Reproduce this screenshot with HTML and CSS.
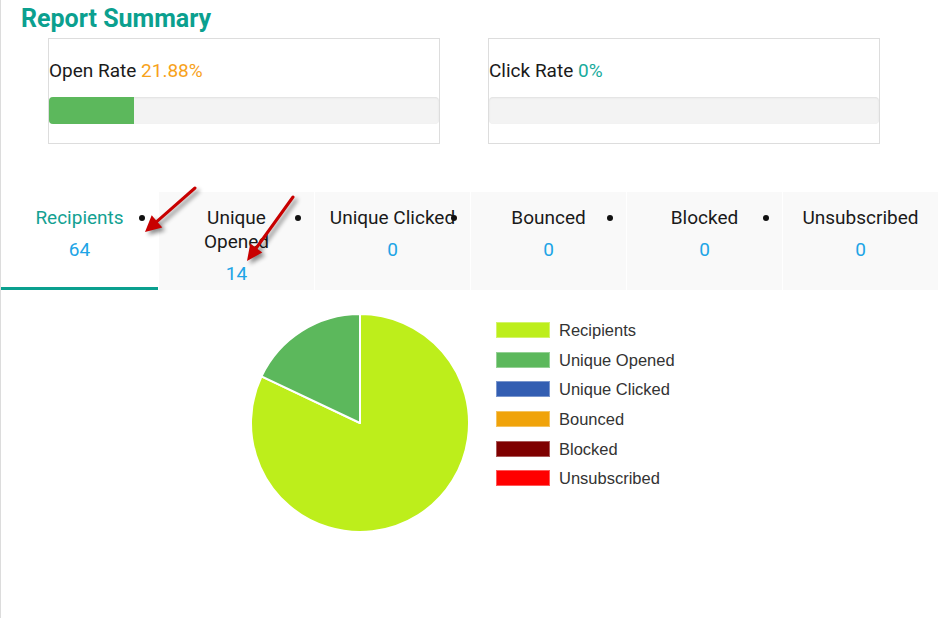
FILE: index.html
```html
<!DOCTYPE html>
<html>
<head>
<meta charset="utf-8">
<link rel="stylesheet" href="styles.css">
</head>
<body>
<div class="page">
  <h2 class="title">Report Summary</h2>
  <div class="rates">
    <div class="rate-card">
      <div class="rate-label">Open Rate <span class="pct-open">21.88%</span></div>
      <div class="progress"><div class="progress-bar" style="width:21.88%"></div></div>
    </div>
    <div class="rate-card">
      <div class="rate-label">Click Rate <span class="pct-click">0%</span></div>
      <div class="progress"><div class="progress-bar" style="width:0%"></div></div>
    </div>
  </div>

  <ul class="tabs">
    <li class="tab active"><div class="tab-label">Recipients</div><div class="tab-num">64</div></li>
    <li class="tab"><div class="tab-label">Unique Opened</div><div class="tab-num">14</div></li>
    <li class="tab"><div class="tab-label">Unique Clicked</div><div class="tab-num">0</div></li>
    <li class="tab"><div class="tab-label">Bounced</div><div class="tab-num">0</div></li>
    <li class="tab"><div class="tab-label">Blocked</div><div class="tab-num">0</div></li>
    <li class="tab"><div class="tab-label">Unsubscribed</div><div class="tab-num">0</div></li>
  </ul>

  <div class="chart">
    <svg class="pie" width="222" height="222" viewBox="0 0 222 222">
      <path d="M111,111 L111,2 A109,109 0 1 1 12.53,64.28 Z" fill="#bdee1b" stroke="#fff" stroke-width="2" stroke-linejoin="round"/>
      <path d="M111,111 L12.53,64.28 A109,109 0 0 1 111,2 Z" fill="#5cb85c" stroke="#fff" stroke-width="2" stroke-linejoin="round"/>
    </svg>
    <ul class="legend">
      <li class="legend-item"><span class="swatch sw-recipients"></span>Recipients</li>
      <li class="legend-item"><span class="swatch sw-opened"></span>Unique Opened</li>
      <li class="legend-item"><span class="swatch sw-clicked"></span>Unique Clicked</li>
      <li class="legend-item"><span class="swatch sw-bounced"></span>Bounced</li>
      <li class="legend-item"><span class="swatch sw-blocked"></span>Blocked</li>
      <li class="legend-item"><span class="swatch sw-unsub"></span>Unsubscribed</li>
    </ul>
  </div>

  <svg class="arrows" width="938" height="618" viewBox="0 0 938 618">
    <g class="arrow">
      <line x1="195" y1="188" x2="157" y2="221.4" stroke="#c80000" stroke-width="3" stroke-linecap="round"/>
      <polygon points="145,232 162.3,227.5 151.7,215.3" fill="#c80000"/>
    </g>
    <g class="arrow">
      <line x1="293" y1="197" x2="256.3" y2="248" stroke="#c80000" stroke-width="3" stroke-linecap="round"/>
      <polygon points="247,261 262.3,252.4 250.3,243.6" fill="#c80000"/>
    </g>
  </svg>
</div>
</body>
</html>
```

FILE: styles.css
```css
* { box-sizing: border-box; }

html, body {
  margin: 0;
  padding: 0;
  background: #fff;
}

body {
  font-family: Roboto, "Liberation Sans", Arial, sans-serif;
  color: #1a1a1a;
}

.page {
  position: relative;
  min-height: 618px;
  border-left: 1px solid #dcdcdc;
  overflow: hidden;
}

.title {
  margin: 4px 0 0 20px;
  font-size: 25px;
  line-height: 30px;
  font-weight: 700;
  color: #0ba08f;
}

.rates {
  display: flex;
  gap: 48px;
  margin-top: 4px;
  padding-left: 47px;
}

.rate-card {
  width: 392px;
  height: 106px;
  border: 1px solid #dddddd;
  padding: 18px 0 19px;
}

.rate-label {
  font-size: 19px;
  line-height: 27px;
  padding-left: 0;
  color: #1a1a1a;
}

.pct-open { color: #f7a21b; }
.pct-click { color: #17ab9c; }

.progress {
  margin-top: 13px;
  height: 27px;
  background: #f3f3f3;
  border-radius: 4px;
  overflow: hidden;
  box-shadow: inset 0 1px 2px rgba(0, 0, 0, 0.08);
}

.progress-bar {
  height: 100%;
  background: #5cb85c;
}

.tabs {
  display: flex;
  list-style: none;
  margin: 48px 0 0;
  padding: 0;
}

.tab {
  position: relative;
  flex: 1 1 0;
  height: 98px;
  background: #f9f9f9;
  border-left: 1px solid #ffffff;
  text-align: center;
  padding: 14px 14px 0;
  font-size: 19px;
}

.tab:first-child {
  border-left: 0;
  flex: 0 0 157px;
}

.tab + .tab::before {
  content: "";
  position: absolute;
  left: -20px;
  top: 23px;
  width: 6px;
  height: 6px;
  border-radius: 50%;
  background: #111;
}

.tab.active {
  background: #fff;
  border-bottom: 3px solid #0ba08f;
}

.tab-label {
  line-height: 24px;
  color: #1a1a1a;
}

.tab.active .tab-label { color: #13a192; }

.tab-num {
  margin-top: 8px;
  line-height: 24px;
  color: #20a4e6;
}

.chart {
  display: flex;
  align-items: flex-start;
  padding: 22px 0 0 248px;
}

.pie { display: block; }

.legend {
  list-style: none;
  margin: 10px 0 0 25px;
  padding: 0;
  font-family: "Liberation Sans", Arial, sans-serif;
  font-size: 16.5px;
  color: #333;
}

.legend-item {
  display: flex;
  align-items: flex-start;
  height: 29.7px;
  line-height: 16px;
}

.swatch {
  width: 54px;
  height: 16px;
  margin-right: 9px;
  box-shadow: inset 0 0 0 1px rgba(255, 255, 255, 0.35);
}

.sw-recipients { background: #bdee1b; }
.sw-opened { background: #5cb85c; }
.sw-clicked { background: #335eb2; }
.sw-bounced { background: #f0a30a; }
.sw-blocked { background: #7f0000; }
.sw-unsub { background: #ff0000; }

.arrows {
  position: absolute;
  left: -1px;
  top: 0;
  pointer-events: none;
}

.arrow {
  filter: drop-shadow(3px 3px 2px rgba(0, 0, 0, 0.45));
}
```
